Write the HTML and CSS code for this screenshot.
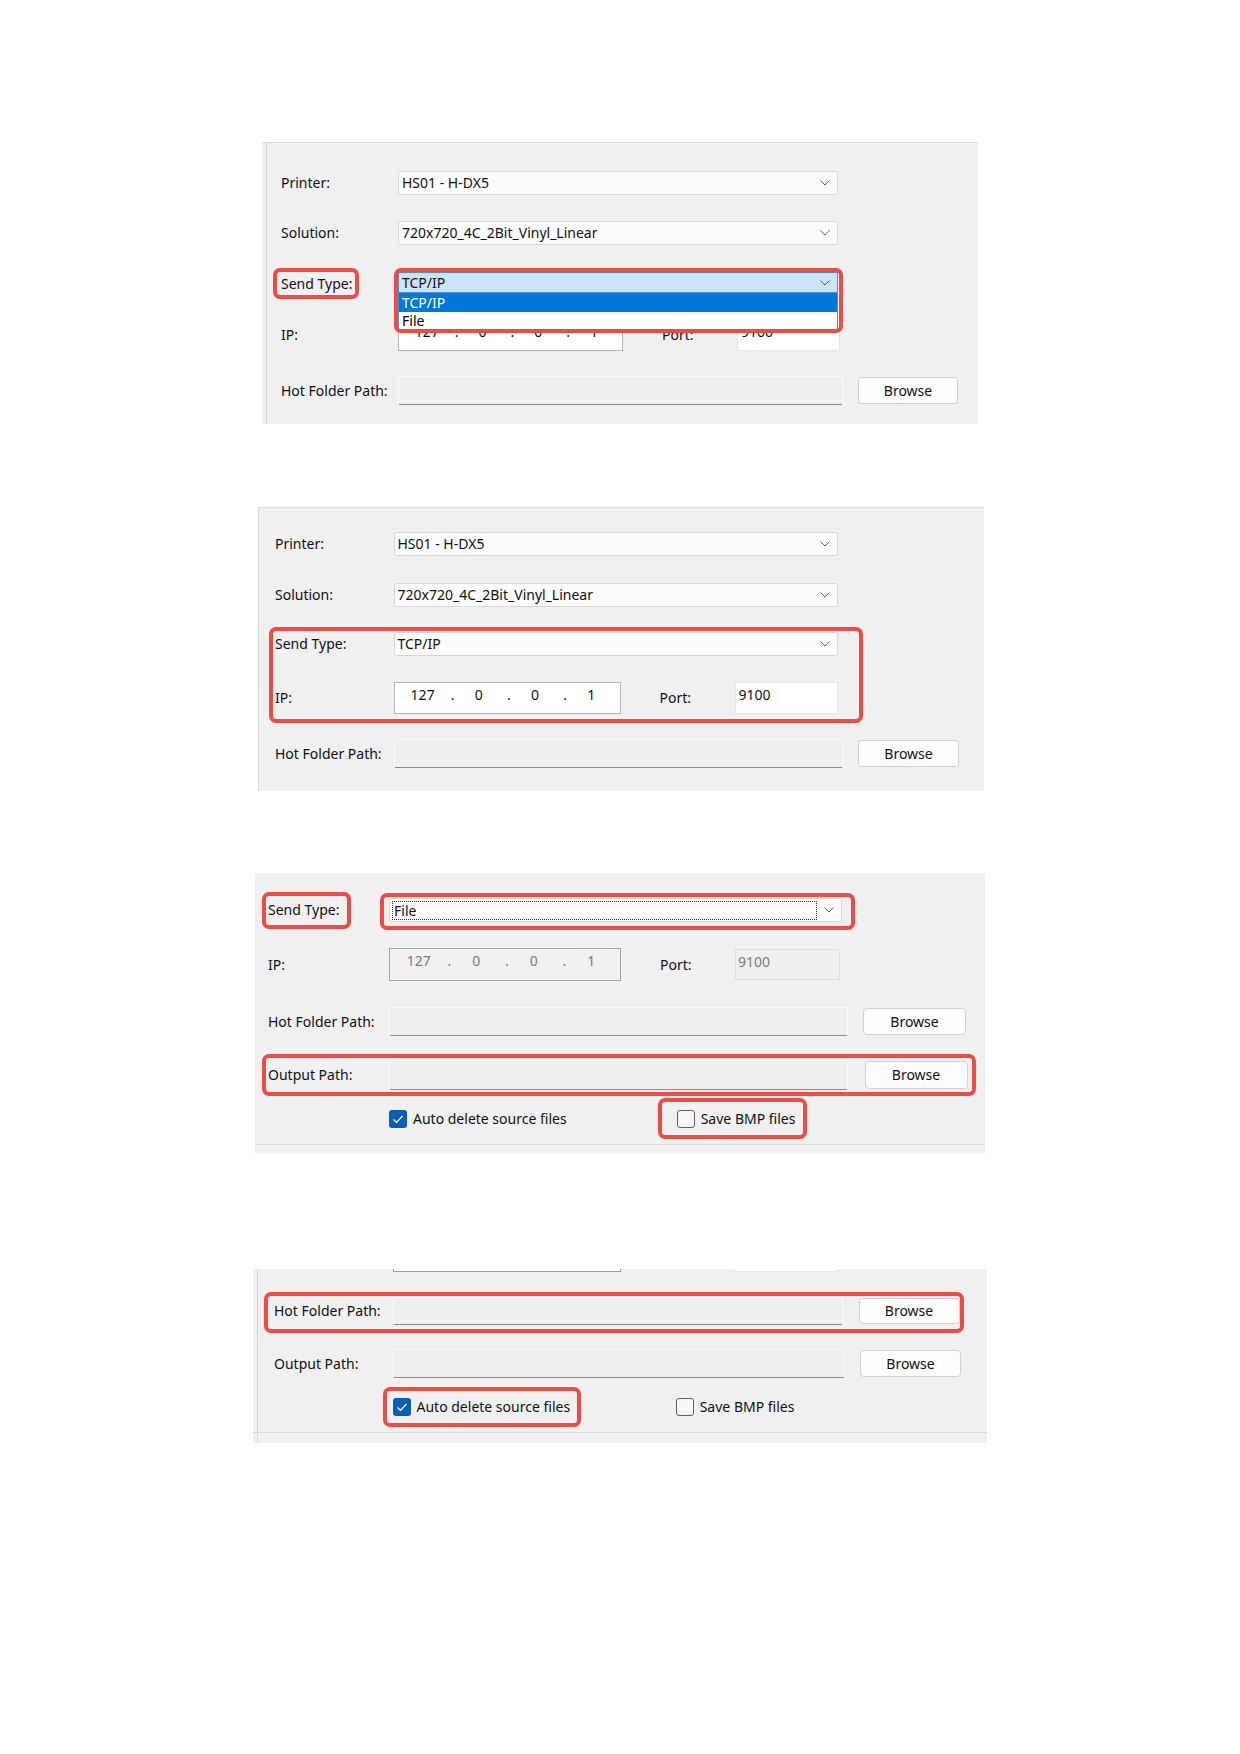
FILE: index.html
```html
<!DOCTYPE html>
<html lang="en">
<head>
<meta charset="utf-8">
<title>Send Type settings</title>
<link rel="stylesheet" href="styles.css">
</head>
<body>
<div class="page">

  <!-- Panel 1: dropdown open -->
  <section class="panel p1">
    <div class="row r-combo mt28">
      <span class="lbl">Printer:</span>
      <div class="combo"><span class="val">HS01 - H-DX5</span><svg class="chev" viewBox="0 0 10 6"><polyline points="0.5,0.5 5,5 9.5,0.5"/></svg></div>
    </div>
    <div class="row r-combo mt26">
      <span class="lbl">Solution:</span>
      <div class="combo"><span class="val">720x720_4C_2Bit_Vinyl_Linear</span><svg class="chev" viewBox="0 0 10 6"><polyline points="0.5,0.5 5,5 9.5,0.5"/></svg></div>
    </div>
    <div class="row r-combo mt27">
      <span class="lbl">Send Type:</span>
      <div class="combo open"><span class="val">TCP/IP</span><svg class="chev" viewBox="0 0 10 6"><polyline points="0.5,0.5 5,5 9.5,0.5"/></svg>
        <ul class="dd"><li class="sel">TCP/IP</li><li>File</li></ul>
      </div>
      <i class="mark m-p1-lbl"></i>
      <i class="mark m-p1-combo"></i>
    </div>
    <div class="row r-ip mt23">
      <span class="lbl">IP:</span>
      <div class="ipbox"><span>127</span><i class="dot">.</i><span>0</span><i class="dot">.</i><span>0</span><i class="dot">.</i><span>1</span></div>
      <span class="plbl">Port:</span>
      <div class="portbox">9100</div>
    </div>
    <div class="row r-path mt25">
      <span class="lbl">Hot Folder Path:</span>
      <div class="field"></div>
      <button class="btn">Browse</button>
    </div>
  </section>

  <!-- Panel 2: TCP/IP selected -->
  <section class="panel p2">
    <div class="row r-combo mt24">
      <span class="lbl">Printer:</span>
      <div class="combo"><span class="val">HS01 - H-DX5</span><svg class="chev" viewBox="0 0 10 6"><polyline points="0.5,0.5 5,5 9.5,0.5"/></svg></div>
    </div>
    <div class="row r-combo mt27">
      <span class="lbl">Solution:</span>
      <div class="combo"><span class="val">720x720_4C_2Bit_Vinyl_Linear</span><svg class="chev" viewBox="0 0 10 6"><polyline points="0.5,0.5 5,5 9.5,0.5"/></svg></div>
    </div>
    <div class="group mt25">
      <div class="row r-combo">
        <span class="lbl">Send Type:</span>
        <div class="combo"><span class="val">TCP/IP</span><svg class="chev" viewBox="0 0 10 6"><polyline points="0.5,0.5 5,5 9.5,0.5"/></svg></div>
      </div>
      <div class="row r-ip mt26">
        <span class="lbl">IP:</span>
        <div class="ipbox"><span>127</span><i class="dot">.</i><span>0</span><i class="dot">.</i><span>0</span><i class="dot">.</i><span>1</span></div>
        <span class="plbl">Port:</span>
        <div class="portbox">9100</div>
      </div>
      <i class="mark m-p2-group"></i>
    </div>
    <div class="row r-path mt25">
      <span class="lbl">Hot Folder Path:</span>
      <div class="field"></div>
      <button class="btn">Browse</button>
    </div>
  </section>

  <!-- Panel 3: File selected -->
  <section class="panel p3">
    <div class="row r-combo mt25">
      <span class="lbl">Send Type:</span>
      <div class="combo"><span class="val focus">File</span><svg class="chev" viewBox="0 0 10 6"><polyline points="0.5,0.5 5,5 9.5,0.5"/></svg></div>
      <i class="mark m-p3-lbl"></i>
      <i class="mark m-p3-combo"></i>
    </div>
    <div class="row r-ip33 mt26">
      <span class="lbl">IP:</span>
      <div class="ipbox dis"><span>127</span><i class="dot">.</i><span>0</span><i class="dot">.</i><span>0</span><i class="dot">.</i><span>1</span></div>
      <span class="plbl">Port:</span>
      <div class="portbox dis">9100</div>
    </div>
    <div class="row r-path mt26">
      <span class="lbl">Hot Folder Path:</span>
      <div class="field"></div>
      <button class="btn">Browse</button>
    </div>
    <div class="row r-path30 mt24">
      <span class="lbl">Output Path:</span>
      <div class="field"></div>
      <button class="btn b2">Browse</button>
      <i class="mark m-p3-out"></i>
    </div>
    <div class="row r-cb mt19">
      <label class="cbx first"><span class="box on"><svg viewBox="0 0 18 18"><polyline points="4.5,9.5 7.5,12.5 13.5,6"/></svg></span>Auto delete source files</label>
      <label class="cbx"><span class="box off"></span>Save BMP files</label>
      <i class="mark m-p3-save"></i>
    </div>
  </section>

  <!-- Panel 4: paths -->
  <section class="panel p4">
    <div class="row r-stub">
      <span class="ipstub"></span>
      <span class="portstub"></span>
    </div>
    <div class="row r-path28 mt25">
      <span class="lbl">Hot Folder Path:</span>
      <div class="field"></div>
      <button class="btn">Browse</button>
      <i class="mark m-p4-hot"></i>
    </div>
    <div class="row r-path mt24">
      <span class="lbl">Output Path:</span>
      <div class="field f2"></div>
      <button class="btn b2">Browse</button>
    </div>
    <div class="row r-cb mt19">
      <label class="cbx first"><span class="box on"><svg viewBox="0 0 18 18"><polyline points="4.5,9.5 7.5,12.5 13.5,6"/></svg></span>Auto delete source files</label>
      <label class="cbx"><span class="box off"></span>Save BMP files</label>
      <i class="mark m-p4-auto"></i>
    </div>
  </section>

</div>
</body>
</html>
```

FILE: styles.css
```css
* { box-sizing: border-box; }

body {
  margin: 0;
  background: #ffffff;
  font-family: "Noto Sans", "Open Sans", sans-serif;
  font-size: 14px;
  color: #111111;
}

.page {
  display: flex;
  flex-direction: column;
  align-items: flex-start;
  padding-top: 142px;
  min-height: 1754px;
}

/* ---------- panels ---------- */
.panel {
  display: flex;
  flex-direction: column;
  align-items: flex-start;
  flex: none;
  background: #f0f0f0;
}

.p1 {
  margin-left: 262px;
  width: 716px;
  height: 282px;
  border-top: 1px solid #dadada;
  padding-left: 19px;
  background: linear-gradient(to right, transparent 4px, #d7d7d7 4px, #d7d7d7 5px, transparent 5px), #f0f0f0;
  --lw: 117px; --cw: 440px; --iw: 225px; --pw: 103px; --fw: 445px; --bw: 100px; --bg: 15px;
}

.p2 {
  margin-left: 258px;
  margin-top: 83px;
  width: 726px;
  height: 284px;
  border-top: 1px solid #dadada;
  border-left: 1px solid #d7d7d7;
  padding-left: 16px;
  --lw: 118.5px; --cw: 444.5px; --iw: 227px; --pw: 103px; --fw: 449.5px; --bw: 101px; --bg: 15px;
}

.p3 {
  margin-left: 255px;
  margin-top: 82px;
  width: 730px;
  height: 280px;
  padding-left: 13px;
  background: linear-gradient(to top, transparent 8px, #d9d9d9 8px, #d9d9d9 9px, transparent 9px), #f0f0f0;
  --lw: 121px; --cw: 453px; --iw: 232px; --pw: 105px; --fw: 458.5px; --bw: 103px; --bg: 15.5px; --cbw: 287.7px;
}

.p4 {
  margin-left: 253px;
  margin-top: 116px;
  width: 734px;
  height: 174px;
  padding-left: 21px;
  background:
    linear-gradient(to right, transparent 4px, #d7d7d7 4px, #d7d7d7 5px, transparent 5px),
    linear-gradient(to top, transparent 10px, #d9d9d9 10px, #d9d9d9 11px, transparent 11px),
    #f0f0f0;
  --lw: 118.5px; --fw: 450.5px; --bw: 101px; --bg: 15.5px; --cbw: 283.2px;
}

/* ---------- rows ---------- */
.row {
  display: flex;
  align-items: center;
  position: relative;
  flex: none;
}
.group { position: relative; display: flex; flex-direction: column; align-items: flex-start; }

.r-combo { height: 24px; }
.r-ip { height: 32px; }
.r-ip33 { height: 33px; }
.r-path { height: 29px; }
.r-path28 { height: 28px; }
.r-path30 { height: 30px; }
.r-cb { height: 20px; padding-left: var(--lw); }
.r-stub { height: 3px; align-items: flex-start; padding-left: var(--lw); }

.mt19 { margin-top: 19px; }
.mt23 { margin-top: 23px; }
.mt24 { margin-top: 24px; }
.mt25 { margin-top: 25px; }
.mt26 { margin-top: 26px; }
.mt27 { margin-top: 27px; }
.mt28 { margin-top: 28px; }

.lbl {
  width: var(--lw);
  flex: none;
  line-height: 20px;
  white-space: nowrap;
  color: #111;
}

/* ---------- combo box ---------- */
.combo {
  width: var(--cw);
  height: 24px;
  flex: none;
  display: flex;
  align-items: center;
  padding: 0 7px 0 3px;
  background: #fcfcfc;
  border: 1px solid #d6d6d6;
  border-radius: 3px;
  position: relative;
}
.combo .val {
  flex: 1;
  white-space: nowrap;
  line-height: 20px;
}
.combo .val.focus {
  flex: none;
  width: 425px;
  height: 19px;
  line-height: 17px;
  border: 1px dotted #333;
  margin-left: -1px;
  padding-left: 1px;
}
.chev {
  width: 10px;
  height: 6px;
  flex: none;
  margin-left: auto;
  fill: none;
  stroke: #5e5e5e;
  stroke-width: 1;
}

.combo.open {
  height: 21px;
  align-self: flex-start;
  background: #cce4f7;
  border-color: #4f8fd1;
  border-radius: 0;
  z-index: 5;
}
.dd {
  position: absolute;
  left: -1px;
  right: -1px;
  top: 20px;
  margin: 0;
  padding: 0;
  list-style: none;
  background: #ffffff;
  border: 1px solid #4f8fd1;
  border-top: none;
}
.dd li {
  height: 17px;
  line-height: 17px;
  padding-left: 3px;
  color: #000;
}
.dd li.sel {
  height: 19px;
  line-height: 19px;
  background: #0078d7;
  color: #ffffff;
}

/* ---------- ip / port ---------- */
.ipbox {
  width: var(--iw);
  height: 100%;
  flex: none;
  display: grid;
  grid-template-columns: 1fr 0 1fr 0 1fr 0 1fr;
  align-items: start;
  padding-top: 2px;
  line-height: 20px;
  text-align: center;
  background: #ffffff;
  border: 1px solid #b5b5b5;
}
.ipbox .dot {
  font-style: normal;
  text-align: left;
  width: 0;
  white-space: nowrap;
}
.ipbox.dis {
  background: #f0f0f0;
  border-color: #a4a4a4;
  color: #7b7b7b;
}
.plbl {
  margin-left: 39px;
  width: 75px;
  flex: none;
  line-height: 20px;
}
.portbox {
  width: var(--pw);
  height: 100%;
  flex: none;
  padding: 2px 0 0 3px;
  line-height: 20px;
  background: #ffffff;
  border: 1px solid #e6e6e6;
}
.portbox.dis {
  height: 31px;
  background: #efefef;
  border-color: #e0e0e0;
  color: #7b7b7b;
  padding-left: 2px;
}

.ipstub {
  width: 228px;
  height: 3px;
  background: #ffffff;
  border: 1px solid #9c9c9c;
  border-top: none;
}
.portstub {
  margin-left: 114px;
  width: 103px;
  height: 3px;
  background: #ffffff;
  border: 1px solid #e6e6e6;
  border-top: none;
}

/* ---------- path fields & buttons ---------- */
.field {
  width: var(--fw);
  height: 100%;
  flex: none;
  background: #efefef;
  border: 1px solid #fafafa;
  border-bottom-color: #888888;
  border-radius: 2px;
}
.p3 .r-path30 .field { width: 459px; }
.p4 .field.f2 { width: 452px; }

.btn {
  margin-left: var(--bg);
  width: var(--bw);
  height: calc(100% - 2px);
  flex: none;
  padding: 0;
  font-family: inherit;
  font-size: 14px;
  line-height: 20px;
  color: #111;
  background: #fdfdfd;
  border: 1px solid #d0d0d0;
  border-radius: 4px;
}
.p3 .btn.b2 { margin-left: 16.5px; }
.p4 .btn.b2 { margin-left: 15.5px; }

/* ---------- checkboxes ---------- */
.cbx {
  display: flex;
  align-items: center;
  gap: 6px;
  line-height: 20px;
  flex: none;
  white-space: nowrap;
}
.cbx.first { width: var(--cbw); }
.box {
  width: 18px;
  height: 18px;
  flex: none;
  border-radius: 3px;
  display: block;
}
.box.on { background: #0a5fb4; }
.box.on svg {
  display: block;
  width: 18px;
  height: 18px;
  fill: none;
  stroke: #ffffff;
  stroke-width: 1.2;
}
.box.off {
  background: #f6f6f6;
  border: 1px solid #5f5f5f;
}

/* ---------- red annotation marks ---------- */
.mark {
  position: absolute;
  border: 4px solid #ee4b44;
  border-radius: 7px;
  z-index: 6;
  pointer-events: none;
}
.m-p1-lbl   { left: -8px;   top: -4px;  width: 86px;  height: 31px; }
.m-p1-combo { left: 113px;  top: -4px;  width: 449px; height: 65px; }
.m-p2-group { left: -6px;   top: -5px;  width: 594px; height: 96px; }
.m-p3-lbl   { left: -6px;   top: -6px;  width: 89px;  height: 37px; }
.m-p3-combo { left: 112px;  top: -5px;  width: 475px; height: 37px; }
.m-p3-out   { left: -6px;   top: -6px;  width: 714px; height: 42px; }
.m-p3-save  { left: 390px;  top: -11px; width: 149px; height: 41px; }
.m-p4-hot   { left: -10px;  top: -5px;  width: 700px; height: 41px; }
.m-p4-auto  { left: 108.5px; top: -10px; width: 198px; height: 40px; }
```
